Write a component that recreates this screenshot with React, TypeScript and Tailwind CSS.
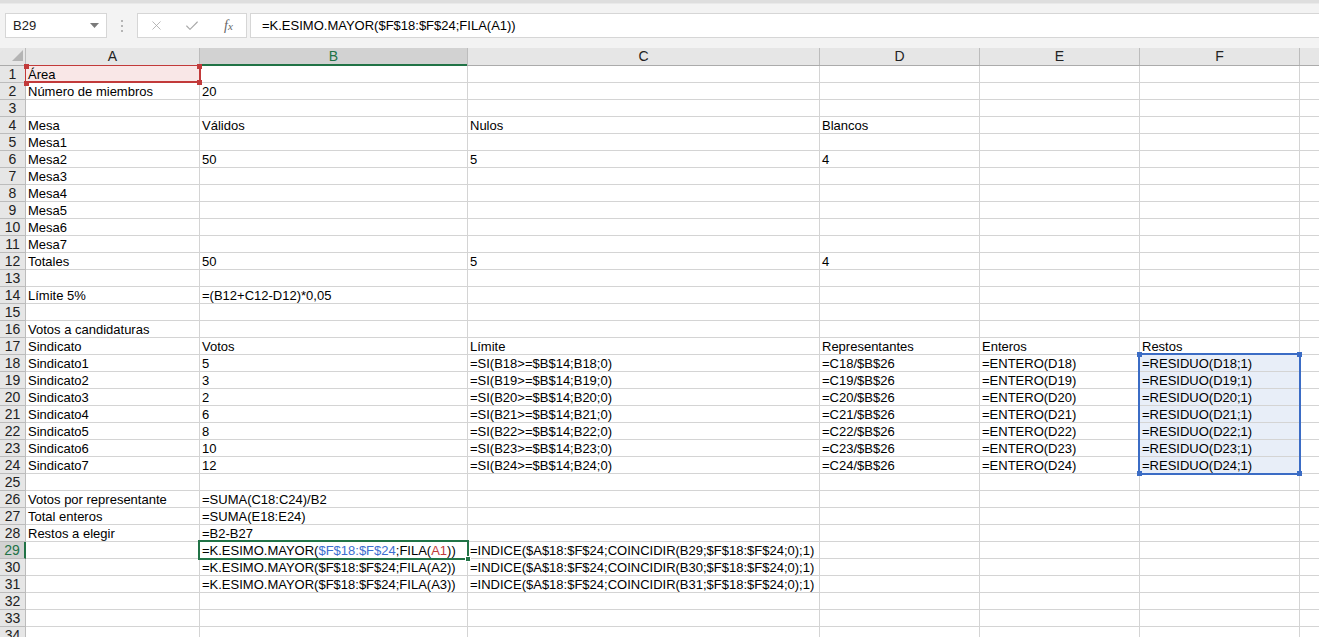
import { X, Check } from "lucide-react"
import type { ReactNode } from "react"

const COLS = ["A", "B", "C", "D", "E", "F", "G"]
const gridCols = "grid grid-cols-[26px_174px_268px_352px_160px_160px_160px_160px]"

const kMayor = (n: number) => `=K.ESIMO.MAYOR($F$18:$F$24;FILA(A${n}))`
const indice = (r: number) => `=INDICE($A$18:$F$24;COINCIDIR(B${r};$F$18:$F$24;0);1)`

// cell text per row: [A, B, C, D, E, F]
const rows: Record<number, (string | ReactNode)[]> = {
  1: ["Área"],
  2: ["Número de miembros", "20"],
  4: ["Mesa", "Válidos", "Nulos", "Blancos"],
  5: ["Mesa1"],
  6: ["Mesa2", "50", "5", "4"],
  7: ["Mesa3"],
  8: ["Mesa4"],
  9: ["Mesa5"],
  10: ["Mesa6"],
  11: ["Mesa7"],
  12: ["Totales", "50", "5", "4"],
  14: ["Límite 5%", "=(B12+C12-D12)*0,05"],
  16: ["Votos a candidaturas"],
  17: ["Sindicato", "Votos", "Límite", "Representantes", "Enteros", "Restos"],
  26: ["Votos por representante", "=SUMA(C18:C24)/B2"],
  27: ["Total enteros", "=SUMA(E18:E24)"],
  28: ["Restos a elegir", "=B2-B27"],
  29: [
    "",
    <>
      =K.ESIMO.MAYOR(<span className="text-[#3c6ecf]">$F$18:$F$24</span>;FILA(
      <span className="text-[#c23a3a]">A1</span>))
    </>,
    indice(29),
  ],
  30: ["", kMayor(2), indice(30)],
  31: ["", kMayor(3), indice(31)],
}

const votes = [5, 3, 2, 6, 8, 10, 12]
votes.forEach((v, i) => {
  const r = 18 + i
  rows[r] = [
    `Sindicato${i + 1}`,
    String(v),
    `=SI(B${r}>=$B$14;B${r};0)`,
    `=C${r}/$B$26`,
    `=ENTERO(D${r})`,
    `=RESIDUO(D${r};1)`,
  ]
})

const Handle = ({ className }: { className: string }) => (
  <div className={`absolute w-[5px] h-[5px] ${className}`} />
)

const FormulaBar = () => (
  <div className="h-[48px] bg-[#f3f3f3] flex flex-col">
    <div className="h-[4px] bg-[#dedede] border-b border-[#e9e9e9]" />
    <div className="flex items-center mt-[9px] h-[25px]">
      <div className="ml-[5px] w-[102px] h-[25px] bg-white border border-[#d6d6d6] flex items-center justify-between pl-[7px] pr-[7px] text-[13px] text-[#222]">
        <span>B29</span>
        <svg width="9" height="5" viewBox="0 0 9 5">
          <path d="M0 0 L9 0 L4.5 5 Z" fill="#7a7a7a" />
        </svg>
      </div>
      <div className="w-[30px] flex flex-col items-center gap-[3px]">
        <div className="w-[2px] h-[2px] bg-[#b5b5b5]" />
        <div className="w-[2px] h-[2px] bg-[#b5b5b5]" />
        <div className="w-[2px] h-[2px] bg-[#b5b5b5]" />
      </div>
      <div className="w-[110px] h-[25px] bg-white border border-[#d6d6d6] flex items-center pl-[11px] gap-[20px]">
        <X size={15} strokeWidth={1.3} color="#a8a8a8" />
        <Check size={16} strokeWidth={1.6} color="#a8a8a8" />
        <span className="italic text-[#666] text-[14px] ml-[4px] font-['Liberation_Serif',serif] leading-none">
          f<span className="text-[11px]">x</span>
        </span>
      </div>
      <div className="ml-[3px] flex-1 h-[25px] bg-white border border-[#d6d6d6] border-r-0 flex items-center pl-[11px] text-[13px] text-black">
        =K.ESIMO.MAYOR($F$18:$F$24;FILA(A1))
      </div>
    </div>
  </div>
)

const Header = () => (
  <div className={`${gridCols} h-[18px] bg-[#e6e6e6] border-b border-[#ababab]`}>
    <div className="relative border-r border-[#bcbcbc]">
      <svg className="absolute left-[12px] top-[2px]" width="11" height="11" viewBox="0 0 11 11">
        <path d="M11 0 L11 11 L0 11 Z" fill="#b4b4b4" />
      </svg>
    </div>
    {COLS.map((c) => (
      <div
        key={c}
        className={
          c === "B"
            ? "relative bg-[#d2d2d2] border-r border-[#bcbcbc] text-center text-[14px] leading-[17px] text-[#217346]"
            : "border-r border-[#bcbcbc] text-center text-[14px] leading-[17px] text-[#222]"
        }
      >
        {c}
        {c === "B" && <div className="absolute left-0 right-0 bottom-[-1px] h-[2px] bg-[#217346]" />}
      </div>
    ))}
  </div>
)

const Row = ({ r }: { r: number }) => {
  const data = rows[r] || []
  const active = r === 29
  return (
    <div className={`${gridCols} h-[17px]`}>
      <div
        className={
          active
            ? "relative bg-[#d2d2d2] border-r-2 border-b border-r-[#217346] border-b-[#bcbcbc] text-center text-[14px] pt-px leading-[15px] text-[#217346]"
            : "bg-[#e6e6e6] border-r border-b border-[#bcbcbc] text-center text-[14px] pt-px leading-[15px] text-[#222]"
        }
      >
        {r}
      </div>
      {COLS.map((c, i) => {
        const pink = r === 1 && c === "A"
        const blue = c === "F" && r >= 18 && r <= 24
        return (
          <div
            key={c}
            className={`border-r border-b border-[#d4d4d4] pl-[2px] pt-px text-[13px] leading-[15px] whitespace-nowrap text-black ${
              pink ? "bg-[#f9e7e7]" : blue ? "bg-[#e8eef8]" : "bg-white"
            }`}
          >
            {data[i]}
          </div>
        )
      })}
    </div>
  )
}

export default function App() {
  const rowNums = Array.from({ length: 34 }, (_, i) => i + 1)
  return (
    <div className="w-[1319px] h-[637px] overflow-hidden bg-white font-['Liberation_Sans',Arial,sans-serif]">
      <FormulaBar />
      <div className="relative">
        <Header />
        {rowNums.map((r) => (
          <Row key={r} r={r} />
        ))}

        {/* A1 reference highlight */}
        <div className="absolute left-[25px] top-[17px] w-[176px] h-[18px] border border-r-2 border-b-2 border-[#c23a3a] pointer-events-none" />
        <Handle className="bg-[#c23a3a] left-[24px] top-[16px] w-[3px] h-[3px]" />
        <Handle className="bg-[#c23a3a] left-[197px] top-[16px] w-[4px] h-[4px]" />
        <Handle className="bg-[#c23a3a] left-[24px] top-[33px] w-[3px] h-[3px]" />
        <Handle className="bg-[#c23a3a] left-[197px] top-[32px]" />

        {/* F18:F24 reference highlight */}
        <div className="absolute left-[1138px] top-[305px] w-[163px] h-[122px] border-2 border-[#3b6cc5] pointer-events-none" />
        <Handle className="bg-[#3b6cc5] left-[1137px] top-[304px]" />
        <Handle className="bg-[#3b6cc5] left-[1297px] top-[304px]" />
        <Handle className="bg-[#3b6cc5] left-[1137px] top-[423px]" />
        <Handle className="bg-[#3b6cc5] left-[1297px] top-[423px]" />

        {/* active cell B29 */}
        <div className="absolute left-[198px] top-[492px] w-[271px] h-[20px] border-2 border-[#217346] pointer-events-none" />
        <Handle className="bg-[#217346] border border-white w-[6px] h-[6px] left-[465px] top-[508px]" />
      </div>
    </div>
  )
}
